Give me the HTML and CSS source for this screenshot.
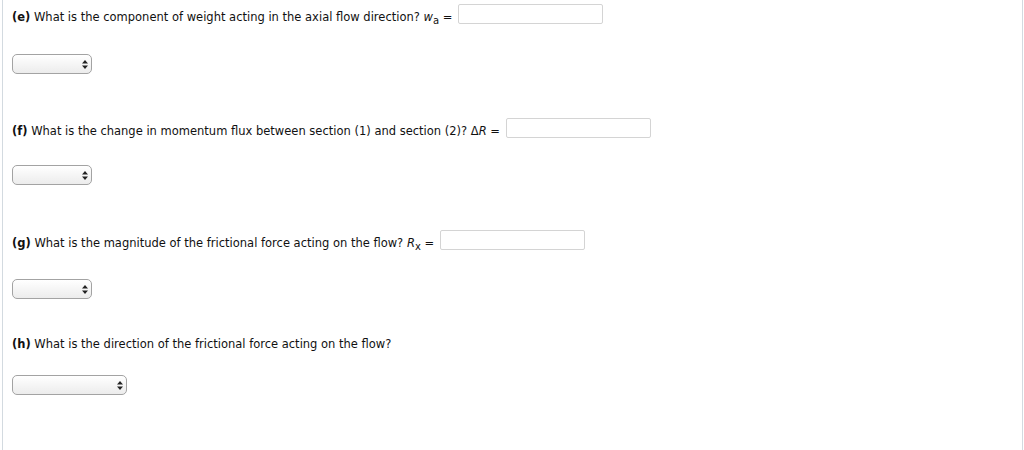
FILE: index.html
```html
<!DOCTYPE html>
<html lang="en">

<head>
    <meta charset="UTF-8">
    <title>Flow Questions</title>
    <link rel="stylesheet" href="styles.css">
</head>

<body>
    <main class="page">
        <section class="part part-e">
            <div class="question">
                <span class="prompt"><b>(e)</b> What is the component of weight acting in the axial flow direction? <i>w</i><sub>a</sub> =</span>
                <input type="text" class="answer-input">
            </div>
            <div class="unit">
                <select class="unit-select"></select>
                <svg class="arrows" width="6" height="9" viewBox="0 0 6 9"><path d="M0 3.5L3 0L6 3.5Z M0 5.5L3 9L6 5.5Z" fill="#222"/></svg>
            </div>
        </section>

        <section class="part part-f">
            <div class="question">
                <span class="prompt"><b>(f)</b> What is the change in momentum flux between section (1) and section (2)? Δ<i>R</i> =</span>
                <input type="text" class="answer-input">
            </div>
            <div class="unit">
                <select class="unit-select"></select>
                <svg class="arrows" width="6" height="9" viewBox="0 0 6 9"><path d="M0 3.5L3 0L6 3.5Z M0 5.5L3 9L6 5.5Z" fill="#222"/></svg>
            </div>
        </section>

        <section class="part part-g">
            <div class="question">
                <span class="prompt"><b>(g)</b> What is the magnitude of the frictional force acting on the flow? <i>R</i><sub>x</sub> =</span>
                <input type="text" class="answer-input">
            </div>
            <div class="unit">
                <select class="unit-select"></select>
                <svg class="arrows" width="6" height="9" viewBox="0 0 6 9"><path d="M0 3.5L3 0L6 3.5Z M0 5.5L3 9L6 5.5Z" fill="#222"/></svg>
            </div>
        </section>

        <section class="part part-h">
            <div class="question">
                <span class="prompt"><b>(h)</b> What is the direction of the frictional force acting on the flow?</span>
            </div>
            <div class="unit">
                <select class="unit-select wide"></select>
                <svg class="arrows" width="6" height="9" viewBox="0 0 6 9"><path d="M0 3.5L3 0L6 3.5Z M0 5.5L3 9L6 5.5Z" fill="#222"/></svg>
            </div>
        </section>
    </main>
</body>

</html>
```

FILE: styles.css
```css
* {
    box-sizing: border-box;
}

body {
    margin: 0;
    font-family: 'DejaVu Sans', Verdana, sans-serif;
    font-size: 11.5px;
    color: #111;
    background: #fff;
}

.page {
    margin: 0 1px 0 2px;
    height: 450px;
    border-left: 1px solid #d3dae0;
    border-right: 1px solid #d3dae0;
    padding: 4px 0 0 9px;
}

.question {
    display: flex;
    align-items: flex-start;
    gap: 6px;
    min-height: 20px;
}

.prompt {
    padding-top: 7px;
    line-height: 13px;
}

.question sub {
    font-size: 10px;
    vertical-align: -3px;
    line-height: 0;
}

.answer-input {
    width: 145px;
    height: 20px;
    border: 1px solid #d4d4d4;
    border-radius: 2px;
    padding: 0 4px;
    font: inherit;
    outline: none;
}

.unit {
    position: relative;
    display: inline-block;
    margin-top: 30px;
}

.unit-select {
    -webkit-appearance: none;
    appearance: none;
    display: block;
    width: 80px;
    height: 20px;
    border: 1px solid #a3a3a3;
    border-radius: 5px;
    background: linear-gradient(#ffffff, #ececec);
    font: inherit;
}

.unit-select.wide {
    width: 115px;
}

.arrows {
    position: absolute;
    right: 4px;
    top: 6px;
    pointer-events: none;
}

.part-f {
    margin-top: 44px;
}

.part-f .unit {
    margin-top: 27px;
}

.part-g {
    margin-top: 45px;
}

.part-g .unit {
    margin-top: 29px;
}

.part-h {
    margin-top: 32px;
}

.part-h .unit {
    margin-top: 24px;
}
```
